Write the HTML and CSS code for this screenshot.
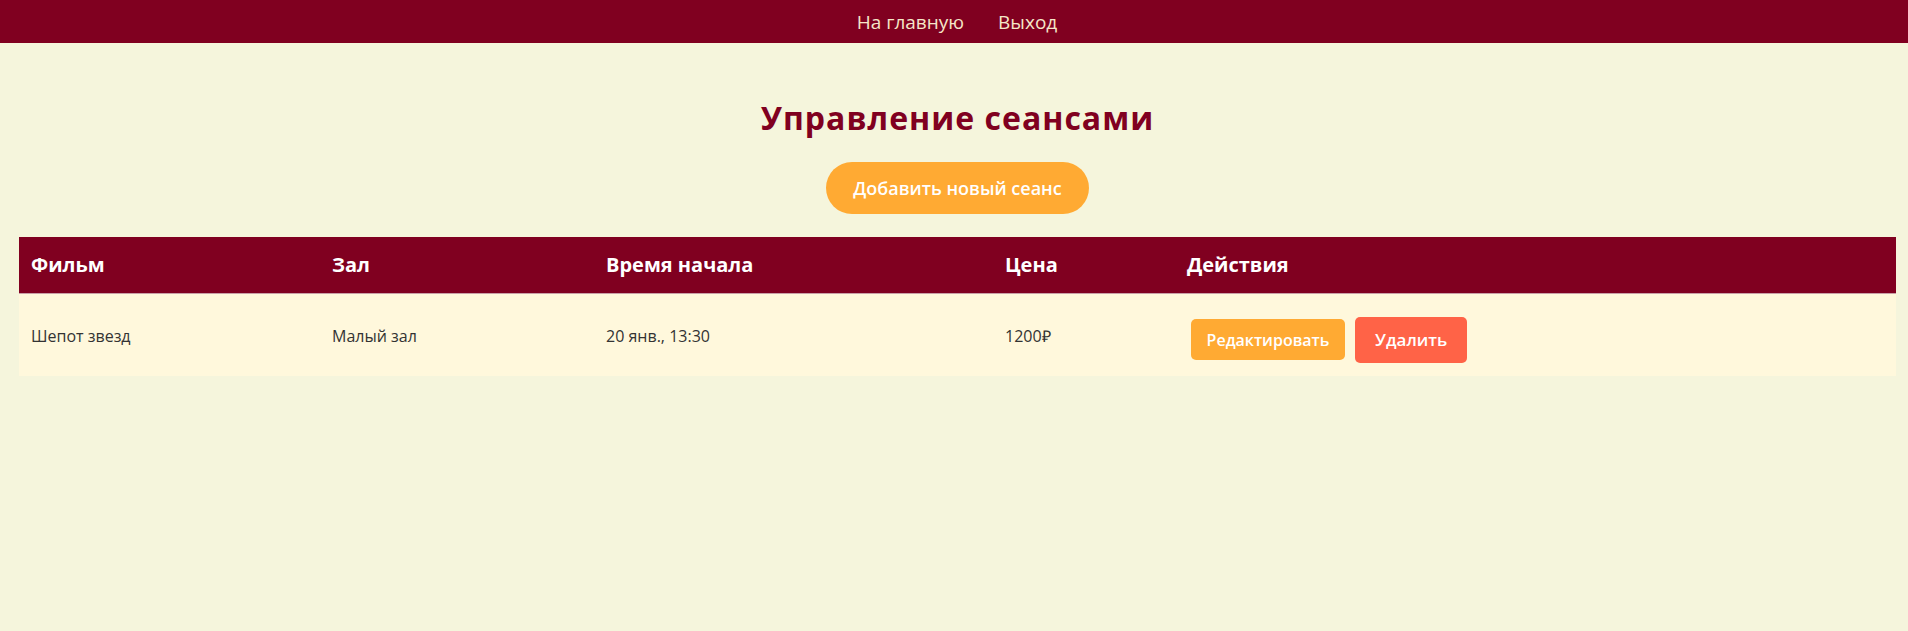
FILE: index.html
```html
<!DOCTYPE html>
<html lang="ru">
<head>
<meta charset="utf-8">
<title>Управление сеансами</title>
<link rel="stylesheet" href="styles.css">
</head>
<body>
<nav class="topnav">
  <a class="topnav-link" href="#">На главную</a>
  <a class="topnav-link" href="#">Выход</a>
</nav>
<main class="page">
  <h1 class="page-title">Управление сеансами</h1>
  <div class="add-wrap">
    <button class="btn-add">Добавить новый сеанс</button>
  </div>
  <table class="sessions">
    <colgroup>
      <col class="col-film">
      <col class="col-hall">
      <col class="col-time">
      <col class="col-price">
      <col class="col-actions">
    </colgroup>
    <thead>
      <tr>
        <th>Фильм</th>
        <th>Зал</th>
        <th>Время начала</th>
        <th>Цена</th>
        <th>Действия</th>
      </tr>
    </thead>
    <tbody>
      <tr>
        <td>Шепот звезд</td>
        <td>Малый зал</td>
        <td>20 янв., 13:30</td>
        <td>1200₽</td>
        <td class="actions">
          <button class="btn-edit">Редактировать</button>
          <button class="btn-delete">Удалить</button>
        </td>
      </tr>
    </tbody>
  </table>
</main>
</body>
</html>
```

FILE: styles.css
```css
* { box-sizing: border-box; }
html, body {
  margin: 0;
  padding: 0;
  background: #f5f5dc;
  font-family: "Comic Sans MS", "Open Sans", sans-serif;
}
.topnav {
  height: 43px;
  background: #800020;
  display: flex;
  justify-content: center;
  align-items: center;
  gap: 34px;
  padding-left: 6px;
}
.topnav-link {
  color: #f5e6c8;
  text-decoration: none;
  font-size: 19px;
}
.page {
  padding: 0 12px 0 19px;
}
.page-title {
  margin: 51px 0 0;
  height: 48px;
  line-height: 48px;
  text-align: center;
  color: #800020;
  font-size: 32px;
  font-weight: 700;
  letter-spacing: 1px;
}
.add-wrap {
  display: flex;
  justify-content: center;
  margin-top: 20px;
}
.btn-add {
  height: 52px;
  width: 263px;
  border: none;
  border-radius: 26px;
  background: #ffaa33;
  color: #fff;
  font-family: inherit;
  font-size: 18px;
  font-weight: 600;
  padding: 0;
}
.sessions {
  margin-top: 23px;
  width: 100%;
  border-collapse: collapse;
  table-layout: fixed;
}
.col-film { width: 301px; }
.col-hall { width: 274px; }
.col-time { width: 399px; }
.col-price { width: 182px; }
.sessions th {
  background: #800020;
  color: #fff;
  text-align: left;
  font-size: 20px;
  font-weight: 700;
  height: 56px;
  padding: 0 12px;
  border-bottom: 1px solid #c9a0a8;
}
.sessions td {
  background: #fff8dc;
  color: #333;
  font-size: 16px;
  height: 83px;
  padding: 2px 12px 0;
}
.sessions td.actions {
  padding: 10px 12px 0 16px;
}
.actions {
  white-space: nowrap;
}
.btn-edit, .btn-delete {
  border: none;
  border-radius: 5px;
  color: #fff;
  font-family: inherit;
  font-weight: 600;
  vertical-align: middle;
  padding: 0;
}
.btn-edit {
  width: 154px;
  height: 41px;
  background: #ffaa33;
  font-size: 16px;
}
.btn-delete {
  width: 112px;
  height: 46px;
  margin-left: 6px;
  background: #ff6347;
  font-size: 17px;
}
```
